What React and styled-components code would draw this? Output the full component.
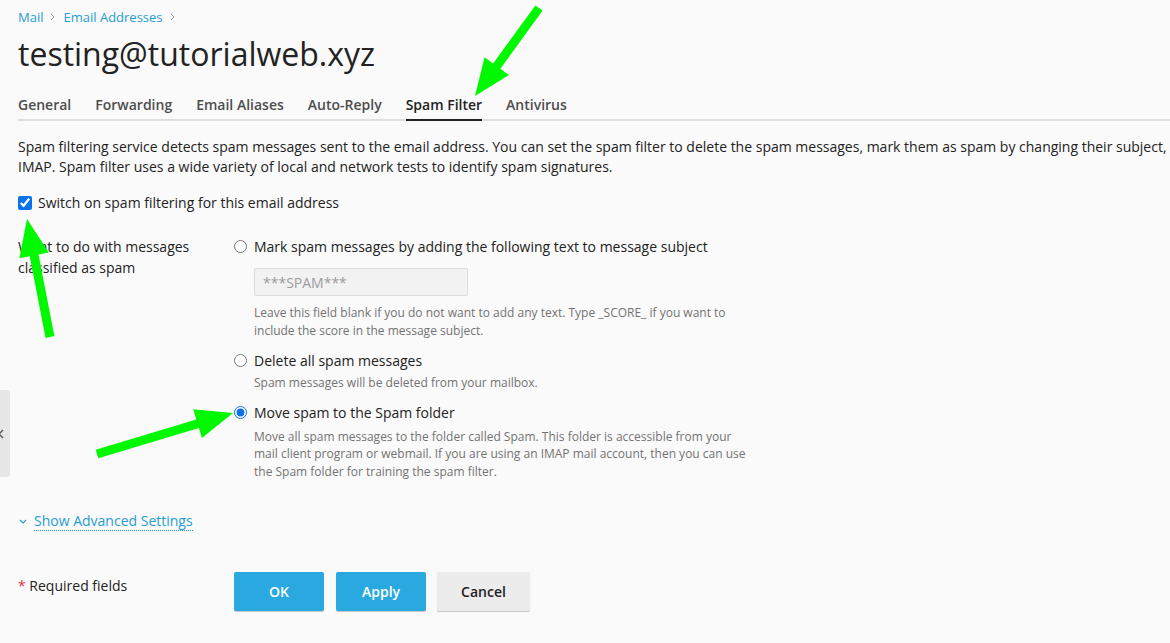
import React from 'react';
import styled, { createGlobalStyle } from 'styled-components';

const GlobalStyle = createGlobalStyle`
  html, body {
    margin: 0;
    padding: 0;
    background: #fafafa;
    overflow: hidden;
  }
  body {
    font-family: "Open Sans", "Liberation Sans", sans-serif;
    color: #222;
  }
`;

const Page = styled.div`
  position: relative;
  width: 1170px;
  height: 643px;
  padding-left: 18px;
  box-sizing: border-box;
  overflow: hidden;
`;

const Crumbs = styled.nav`
  display: flex;
  align-items: center;
  padding-top: 8px;
  font-size: 13px;
  line-height: 18px;
`;

const CrumbLink = styled.a`
  color: #259dd2;
  text-decoration: none;
`;

const CrumbSep = styled.svg`
  margin: 0 8px 0 7px;
`;

const Title = styled.h1`
  margin: 8px 0 0;
  font-size: 32px;
  font-weight: 400;
  line-height: 40px;
  color: #222;
`;

const Tabs = styled.div`
  display: flex;
  gap: 24px;
  margin-top: 21px;
  border-bottom: 2px solid #dedede;
`;

const Tab = styled.div`
  font-size: 14px;
  font-weight: 600;
  line-height: 20px;
  padding-bottom: 4px;
  margin-bottom: -2px;
  color: ${(p) => (p.$active ? '#222' : '#4d4d4d')};
  border-bottom: 2px solid ${(p) => (p.$active ? '#222' : 'transparent')};
`;

const Intro = styled.p`
  margin: 16px 0 0;
  font-size: 14px;
  line-height: 20px;
  white-space: nowrap;
`;

const Line = styled.span`
  display: block;
`;

const CheckRow = styled.label`
  display: flex;
  align-items: center;
  gap: 6px;
  margin-top: 16px;
  font-size: 14px;
  line-height: 20px;
`;

const Check = styled.input`
  width: 14px;
  height: 14px;
  margin: 0;
  accent-color: #0a72e8;
`;

const FormRow = styled.div`
  display: grid;
  grid-template-columns: 216px 1fr;
  margin-top: ${(p) => p.$top || 0}px;
`;

const FieldLabel = styled.div`
  font-size: 14px;
  line-height: 21px;
  width: 190px;
`;

const Options = styled.div`
  display: flex;
  flex-direction: column;
`;

const Option = styled.div`
  margin-top: ${(p) => p.$top || 0}px;
`;

const RadioRow = styled.label`
  display: flex;
  align-items: center;
  gap: 7px;
  font-size: 14px;
  line-height: 21px;
`;

const Radio = styled.input`
  width: 13px;
  height: 13px;
  margin: 0;
  accent-color: #0a72e8;
`;

const Indent = styled.div`
  padding-left: 20px;
`;

const TextField = styled.input`
  display: block;
  margin-top: 11px;
  width: 214px;
  height: 28px;
  box-sizing: border-box;
  padding: 0 8px;
  border: 1px solid #dcdcdc;
  border-radius: 2px;
  background: #f2f2f2;
  font-family: inherit;
  font-size: 14px;
  color: #999;
  &::placeholder {
    color: #9d9d9d;
  }
`;

const Help = styled.div`
  margin-top: ${(p) => p.$top || 4}px;
  max-width: 500px;
  font-size: 12px;
  line-height: 17.5px;
  color: #737373;
`;

const Advanced = styled.div`
  display: flex;
  align-items: center;
  margin-top: 31px;
  font-size: 14px;
  line-height: 21px;
`;

const AdvLink = styled.a`
  margin-left: 7px;
  color: #259dd2;
  text-decoration: none;
  border-bottom: 1px dotted #259dd2;
  line-height: 19px;
`;

const Footer = styled.div`
  display: grid;
  grid-template-columns: 216px 1fr;
  align-items: center;
  margin-top: 41px;
`;

const Required = styled.div`
  font-size: 14px;
  line-height: 20px;
  margin-top: -11px;
`;

const Star = styled.span`
  color: #d9354f;
`;

const Buttons = styled.div`
  display: flex;
  gap: 12px;
`;

const Button = styled.button`
  height: 39px;
  min-width: ${(p) => p.$w || 90}px;
  margin-left: ${(p) => p.$shift || 0}px;
  padding: 0 16px;
  border: none;
  border-radius: 2px;
  font-family: inherit;
  font-size: 14px;
  font-weight: 600;
  color: ${(p) => (p.$primary ? '#fff' : '#222')};
  background: ${(p) => (p.$primary ? '#29a9df' : '#ececec')};
  box-shadow: 0 1px 1px rgba(0, 0, 0, 0.22);
`;

const SideHandle = styled.div`
  position: absolute;
  left: 0;
  top: 390px;
  width: 10px;
  height: 87px;
  background: #e6e6e6;
  border-radius: 0 4px 4px 0;
  display: flex;
  align-items: center;
`;

const Overlay = styled.svg`
  position: absolute;
  left: 0;
  top: 0;
  pointer-events: none;
`;

function arrowPoints(tail, tip, w = 4.5, hw = 15, len = 37) {
  const dx = tip[0] - tail[0];
  const dy = tip[1] - tail[1];
  const d = Math.hypot(dx, dy);
  const ux = dx / d;
  const uy = dy / d;
  const nx = -uy;
  const ny = ux;
  const bx = tip[0] - ux * len;
  const by = tip[1] - uy * len;
  const pts = [
    [tail[0] + nx * w, tail[1] + ny * w],
    [bx + nx * w, by + ny * w],
    [bx + nx * hw, by + ny * hw],
    tip,
    [bx - nx * hw, by - ny * hw],
    [bx - nx * w, by - ny * w],
    [tail[0] - nx * w, tail[1] - ny * w],
  ];
  return pts.map((p) => p[0].toFixed(1) + ',' + p[1].toFixed(1)).join(' ');
}

const arrows = [
  { tail: [539, 8], tip: [475, 96] },
  { tail: [50, 337], tip: [27, 219] },
  { tail: [97, 454], tip: [233, 413] },
];

const Chevron = () => (
  <CrumbSep width="5" height="8" viewBox="0 0 5 8">
    <path d="M1 1l3 3-3 3" fill="none" stroke="#9a9a9a" strokeWidth="1" />
  </CrumbSep>
);

function App() {
  const tabs = ['General', 'Forwarding', 'Email Aliases', 'Auto-Reply', 'Spam Filter', 'Antivirus'];

  return (
    <Page>
      <GlobalStyle />
      <Crumbs>
        <CrumbLink>Mail</CrumbLink>
        <Chevron />
        <CrumbLink>Email Addresses</CrumbLink>
        <Chevron />
      </Crumbs>
      <Title>testing@tutorialweb.xyz</Title>
      <Tabs>
        {tabs.map((t) => (
          <Tab key={t} $active={t === 'Spam Filter'}>{t}</Tab>
        ))}
      </Tabs>

      <Intro>
        <Line>
          Spam filtering service detects spam messages sent to the email address. You can set the spam filter to delete the spam messages, mark them as spam by changing their subject,
        </Line>
        <Line>IMAP. Spam filter uses a wide variety of local and network tests to identify spam signatures.</Line>
      </Intro>

      <CheckRow>
        <Check type="checkbox" defaultChecked />
        Switch on spam filtering for this email address
      </CheckRow>

      <FormRow $top={23}>
        <FieldLabel>What to do with messages classified as spam</FieldLabel>
        <Options>
          <Option>
            <RadioRow>
              <Radio type="radio" name="action" />
              Mark spam messages by adding the following text to message subject
            </RadioRow>
            <Indent>
              <TextField placeholder="***SPAM***" />
              <Help $top={8}>
                Leave this field blank if you do not want to add any text. Type _SCORE_ if you want to include the score in the message subject.
              </Help>
            </Indent>
          </Option>
          <Option $top={11}>
            <RadioRow>
              <Radio type="radio" name="action" />
              Delete all spam messages
            </RadioRow>
            <Indent>
              <Help $top={3}>Spam messages will be deleted from your mailbox.</Help>
            </Indent>
          </Option>
          <Option $top={10}>
            <RadioRow>
              <Radio type="radio" name="action" defaultChecked />
              Move spam to the Spam folder
            </RadioRow>
            <Indent>
              <Help $top={5}>
                Move all spam messages to the folder called Spam. This folder is accessible from your mail client program or webmail. If you are using an IMAP mail account, then you can use the Spam folder for training the spam filter.
              </Help>
            </Indent>
          </Option>
        </Options>
      </FormRow>

      <Advanced>
        <svg width="8" height="5" viewBox="0 0 8 5" style={{ marginLeft: 1 }}>
          <path d="M1 1l3 3 3-3" fill="none" stroke="#259dd2" strokeWidth="1.2" />
        </svg>
        <AdvLink>Show Advanced Settings</AdvLink>
      </Advanced>

      <Footer>
        <Required>
          <Star>*</Star> Required fields
        </Required>
        <Buttons>
          <Button $primary>OK</Button>
          <Button $primary>Apply</Button>
          <Button $w={93} $shift={-1}>Cancel</Button>
        </Buttons>
      </Footer>

      <SideHandle>
        <svg width="6" height="10" viewBox="0 0 6 10" style={{ marginLeft: -2 }}>
          <path d="M5 1L1 5l4 4" fill="none" stroke="#555" strokeWidth="1.3" />
        </svg>
      </SideHandle>

      <Overlay width="1170" height="643" viewBox="0 0 1170 643">
        {arrows.map((a, i) => (
          <polygon key={i} points={arrowPoints(a.tail, a.tip)} fill="#00f800" />
        ))}
      </Overlay>
    </Page>
  );
}

export default App;
